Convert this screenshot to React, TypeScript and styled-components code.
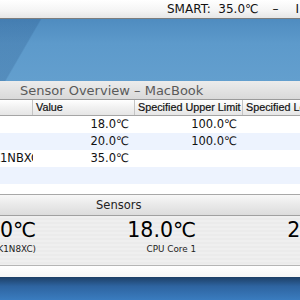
import React from "react";
import styled, { createGlobalStyle } from "styled-components";

const Global = createGlobalStyle`
  html, body { margin: 0; padding: 0; }
  body {
    width: 300px; height: 300px; overflow: hidden;
    background: #5f99c9;
    font-family: "DejaVu Sans", "Liberation Sans", sans-serif;
  }
`;

const Screen = styled.div`
  width: 300px;
  height: 300px;
  overflow: hidden;
  display: flex;
  flex-direction: column;
`;

const MenuBar = styled.div`
  height: 18px;
  flex: none;
  background: linear-gradient(#ffffff, #f4f4f4 60%, #e6e6e6);
  border-bottom: 1px solid #7d7d7d;
  display: flex;
  align-items: center;
  padding-left: 167px;
  font-family: "DejaVu Sans", sans-serif;
  font-size: 12px;
  color: #111;
  white-space: nowrap;
  overflow: hidden;
`;

const MenuItem = styled.span<{ $gap?: number }>`
  flex: none;
  margin-left: ${(p) => p.$gap ?? 0}px;
`;

const Desktop = styled.div`
  height: 62px;
  flex: none;
  background:
    linear-gradient(120deg, rgba(20,60,110,0.18) 0 12%, rgba(0,0,0,0) 12.5%),
    linear-gradient(180deg, #4f8cc0, #5d9acb 40%, #639fce);
`;

const Window = styled.div`
  flex: none;
  margin-left: -60px;
  width: 440px;
  background: #fff;
  display: flex;
  flex-direction: column;
`;

const TitleBar = styled.div`
  height: 18px;
  background: linear-gradient(#ececec, #d9d9d9);
  border-bottom: 1px solid #9a9a9a;
  display: flex;
  align-items: center;
  padding-left: 80px;
  font-size: 13px;
  color: #5a5a5a;
  white-space: nowrap;
`;

const Grid = styled.div`
  display: grid;
  grid-template-columns: 93px 102px 108px 137px;
`;

const HeaderRow = styled(Grid)`
  height: 15px;
  background: linear-gradient(#ffffff, #f1f1f1 50%, #e6e6e6);
  border-bottom: 1px solid #a5a5a5;
`;

const HeaderCell = styled.div`
  font-family: "Liberation Sans", sans-serif;
  font-size: 10.8px;
  color: #111;
  -webkit-text-stroke: 0.2px #111;
  padding-left: 3px;
  line-height: 15px;
  border-right: 1px solid #c4c4c4;
  white-space: nowrap;
  overflow: hidden;
`;

const Row = styled(Grid)<{ $alt?: boolean }>`
  height: 17px;
  background: ${(p) => (p.$alt ? "#edf3fe" : "#ffffff")};
`;

const Cell = styled.div<{ $right?: boolean }>`
  font-size: 11.5px;
  line-height: 17px;
  color: #111;
  white-space: nowrap;
  overflow: hidden;
  text-align: ${(p) => (p.$right ? "right" : "left")};
  padding: 0 6px 0 0;
`;

const NameCell = styled(Cell)`
  padding-left: 48px;
  padding-right: 0;
  text-overflow: clip;
`;

const Spacer = styled.div`
  height: 10px;
  background: #fff;
`;

const SensorsBox = styled.div`
  border-top: 1px solid #a8a8a8;
  display: flex;
  flex-direction: column;
`;

const SensorsHeader = styled.div`
  height: 20px;
  background: linear-gradient(#f8f8f8, #e9e9e9 50%, #dcdcdc);
  border-bottom: 1px solid #a0a0a0;
  font-size: 11.5px;
  color: #222;
  line-height: 20px;
  padding-left: 156px;
`;

const SensorsPanel = styled.div`
  height: 49px;
  margin-left: -64px;
  background: repeating-linear-gradient(#efefef 0 2px, #ebebeb 2px 4px);
  border-bottom: 1px solid #b5b5b5;
  display: flex;
`;

const SensorItem = styled.div`
  width: 160px;
  flex: none;
  display: flex;
  flex-direction: column;
  align-items: flex-end;
  padding-top: 2px;
`;

const Big = styled.div`
  font-size: 20.5px;
  line-height: 25px;
  color: #000;
  white-space: nowrap;
`;

const Small = styled.div`
  font-size: 8.8px;
  line-height: 12px;
  color: #222;
  white-space: nowrap;
`;

const Footer = styled.div`
  height: 11px;
  background: linear-gradient(#ffffff, #f6f6f6);
`;

const BottomDesk = styled.div`
  flex: 1;
  background: linear-gradient(180deg, #1d3f66, #2e64a0 40%, #3a7cbf);
`;

const rows = [
  { name: "", value: "18.0℃", upper: "100.0℃" },
  { name: "", value: "20.0℃", upper: "100.0℃" },
  { name: "(K1NBXC)", value: "35.0℃", upper: "" },
  { name: "", value: "", upper: "" },
];

export default function App() {
  return (
    <Screen>
      <Global />
      <MenuBar>
        <MenuItem>SMART:&nbsp;&nbsp;35.0℃</MenuItem>
        <MenuItem $gap={14}>–</MenuItem>
        <MenuItem $gap={17}>I</MenuItem>
      </MenuBar>
      <Desktop />
      <Window>
        <TitleBar>Sensor Overview – MacBook</TitleBar>
        <HeaderRow>
          <HeaderCell />
          <HeaderCell>Value</HeaderCell>
          <HeaderCell>Specified Upper Limit</HeaderCell>
          <HeaderCell>Specified Lower Limit</HeaderCell>
        </HeaderRow>
        {rows.map((r, i) => (
          <Row key={i} $alt={i % 2 === 1}>
            <NameCell>{r.name}</NameCell>
            <Cell $right>{r.value}</Cell>
            <Cell $right>{r.upper}</Cell>
            <Cell />
          </Row>
        ))}
        <Spacer />
        <SensorsBox>
          <SensorsHeader>Sensors</SensorsHeader>
          <SensorsPanel>
            <SensorItem>
              <Big>35.0℃</Big>
              <Small>SMART Disk (K1N8XC)</Small>
            </SensorItem>
            <SensorItem>
              <Big>18.0℃</Big>
              <Small>CPU Core 1</Small>
            </SensorItem>
            <SensorItem>
              <Big>20.0℃</Big>
              <Small>CPU Core 2</Small>
            </SensorItem>
          </SensorsPanel>
          <Footer />
        </SensorsBox>
      </Window>
      <BottomDesk />
    </Screen>
  );
}
